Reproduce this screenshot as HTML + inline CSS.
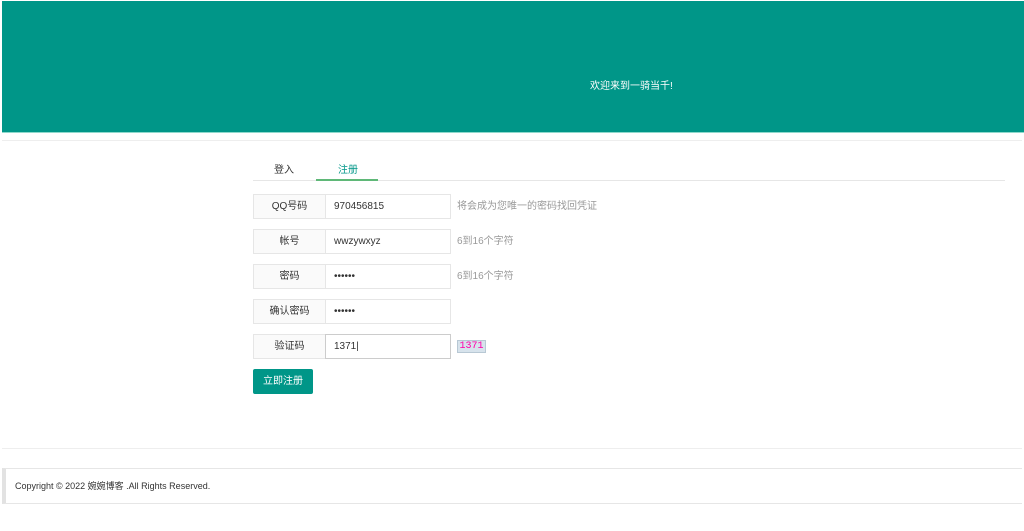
<!DOCTYPE html>
<html><head><meta charset="utf-8"><style>
*{margin:0;padding:0;box-sizing:border-box}
body{width:1024px;height:531px;background:#fff;font-family:"Liberation Sans","Noto Sans CJK SC",sans-serif;font-size:10px;color:#333;position:relative;overflow:hidden}
.hdr{position:absolute;left:2px;top:1px;width:1022px;height:132px;background:#009688;border-bottom:1px solid #8fd9cc;}
.hdr span{position:absolute;left:588px;top:76px;color:#fff;font-size:10px}
.l1{position:absolute;left:2px;top:140px;width:1020px;height:1px;background:#eee}
.tabs{position:absolute;left:253px;top:180px;width:752px;height:1px;background:#e6e6e6}
.tab{position:absolute;top:160px;font-size:10px;white-space:nowrap}
.ul{position:absolute;left:316px;top:179px;width:62px;height:2px;background:#5fb878}
.row{position:absolute;left:253px;height:25px}
.lab{position:absolute;left:0;top:0;width:73px;height:25px;border:1px solid #e6e6e6;background:#fafafa;text-align:center;line-height:23px;white-space:nowrap}
.inp{position:absolute;left:72px;top:0;width:126px;height:25px;border:1px solid #e6e6e6;background:#fff;line-height:23px;padding-left:8px;white-space:nowrap}
.hint{position:absolute;left:204px;top:0;line-height:25px;color:#999;white-space:nowrap}
.btn{position:absolute;left:253px;top:369px;width:60px;height:25px;background:#009688;color:#fff;text-align:center;line-height:25px;border-radius:2px}
.cap{position:absolute;left:457px;top:340px;width:29px;height:13px;background:#d7e3ec;border:1px solid #b8c8d4;color:#f0a;font-family:"Liberation Mono",monospace;font-size:10px;line-height:11px;text-align:center}
.l2{position:absolute;left:2px;top:448px;width:1020px;height:1px;background:#eee}
.ft{position:absolute;left:2px;top:468px;width:1020px;height:36px;border-top:1px solid #e6e6e6;border-bottom:1px solid #e6e6e6;border-left:4px solid #e2e2e2;padding-left:9px;line-height:34px;font-size:9px;white-space:nowrap}
</style></head><body>
<div class="hdr"><span>欢迎来到一骑当千!</span></div>
<div class="l1"></div>
<div class="tab" style="left:274px;top:161px">登入</div>
<div class="tab" style="left:338px;top:161px;color:#009688">注册</div>
<div class="tabs"></div><div class="ul"></div>
<div class="row" style="top:194px"><div class="lab">QQ号码</div><div class="inp">970456815</div><div class="hint">将会成为您唯一的密码找回凭证</div></div>
<div class="row" style="top:229px"><div class="lab">帐号</div><div class="inp">wwzywxyz</div><div class="hint">6到16个字符</div></div>
<div class="row" style="top:264px"><div class="lab">密码</div><div class="inp">••••••</div><div class="hint">6到16个字符</div></div>
<div class="row" style="top:299px"><div class="lab">确认密码</div><div class="inp">••••••</div></div>
<div class="row" style="top:334px"><div class="lab">验证码</div><div class="inp" style="border-color:#ccc">1371|</div></div>
<div class="cap">1371</div>
<div class="btn">立即注册</div>
<div class="l2"></div>
<div class="ft">Copyright © 2022 婉婉博客 .All Rights Reserved.</div>
</body></html>
